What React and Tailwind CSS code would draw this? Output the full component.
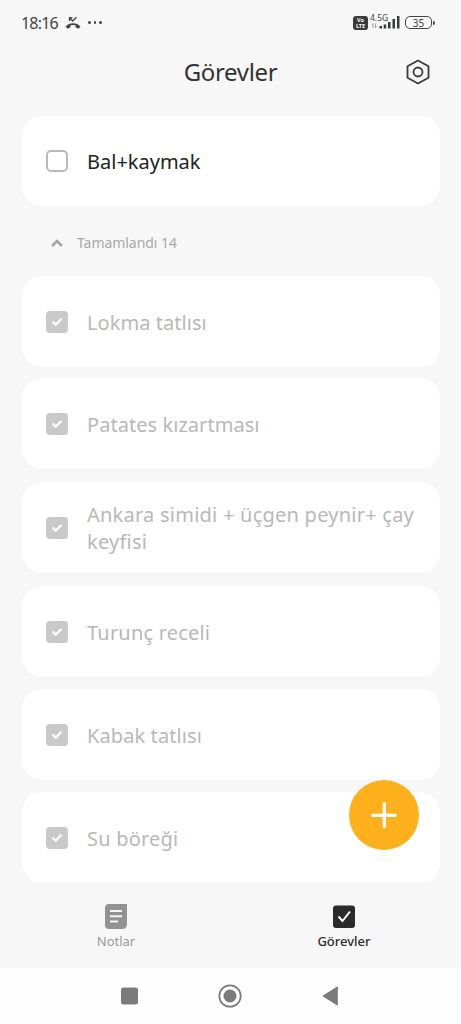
import React from 'react';

const tasks = [
  { title: 'Lokma tatlısı', gap: 'mb-[11px]', tracking: 'tracking-[0.05px]' },
  { title: 'Patates kızartması', gap: 'mb-[13px]', tracking: 'tracking-[0.050px]' },
  { title: 'Ankara simidi + üçgen peynir+ çay keyfisi', gap: 'mb-[13px]', tracking: 'tracking-[0.24px]' },
  { title: 'Turunç receli', gap: 'mb-3', tracking: 'tracking-[0.2px]' },
  { title: 'Kabak tatlısı', gap: 'mb-3', tracking: 'tracking-[0.1px]' },
  { title: 'Su böreği', gap: '', tracking: 'tracking-[0.2px]' },
];

const MissedCall = () => (
  <svg className="w-4 h-4" viewBox="0 0 16 16" fill="none">
    <path d="M0.500 11.500C4 7 12 7 15.500 11.500L13.300 13.700L10.500 12.200V10.300Q8 9.500 5.500 10.300V12.200L2.700 13.700Z" fill="#444" />
    <path d="M4.500 6V2.700H7.500M4.700 3L7.700 6L11.500 2.200" stroke="#444" strokeWidth="1.300" />
  </svg>
);

const StatusBar = () => (
  <div className="h-[45px] shrink-0 flex items-center pl-[21px] pr-[26px] text-[#444]">
    <span className="w-[37px] text-[16px] tracking-[-0.8px] leading-none whitespace-nowrap">18:16</span>
    <span className="ml-[7px]"><MissedCall /></span>
    <div className="ml-[7px] flex gap-[3px]">
      {[0, 1, 2].map((i) => (
        <span key={i} className="w-[2.500px] h-[2.500px] rounded-full bg-[#444]" />
      ))}
    </div>
    <div className="ml-auto flex items-center">
      <div className="w-[15px] h-[14px] rounded-[3px] bg-[#3a3a3a] text-white font-bold text-[5.500px] leading-[6px] flex flex-col items-center justify-center">
        <span>Vo</span>
        <span>LTE</span>
      </div>
      <div className="relative ml-[1px] w-[33px] h-[15px]">
        <span className="absolute left-[1px] top-[-1px] text-[8.500px] leading-[8px] whitespace-nowrap">4.5G</span>
        <svg className="absolute inset-0 w-8 h-[15px]" viewBox="0 0 32 15">
          <path d="M4 13V8.500M2.800 10L4 8.500M6.500 8.500V13M7.700 11.500L6.500 13" stroke="#999" strokeWidth="0.900" fill="none" />
          <path d="M10.500 11h2.500v2.500h-2.500zM14.700 9.500h2.500v4h-2.500zM19 7h2.500v6.500h-2.500zM23.500 4h2.500v9.500h-2.500zM28 1h2.500v12.500h-2.500z" fill="#3a3a3a" />
        </svg>
      </div>
      <div className="ml-[3px] w-[27px] h-[13px] rounded-[5px] border-[1.500px] border-[#444] text-[10px] leading-none flex items-center justify-center">35</div>
      <span className="ml-[1px] w-[2px] h-[4px] rounded-r bg-[#444]" />
    </div>
  </div>
);

const DoneBox = () => (
  <svg className="w-[22px] h-[22px] shrink-0" viewBox="0 0 22 22" fill="none">
    <rect width="22" height="22" rx="4" fill="#c9c9c9" />
    <path d="M6.500 10.700L9.700 13.700L15.500 7.700" stroke="#fff" strokeWidth="2.300" />
  </svg>
);

const TaskCard = ({ task }) => (
  <div className={`h-[91px] shrink-0 rounded-[20px] bg-white flex items-center pl-[23.5px] ${task.gap}`}>
    <DoneBox />
    <p className={`ml-[19.5px] w-[338px] pt-[1px] text-[20px] leading-[27px] text-[#b8b8b8] ${task.tracking}`}>{task.title}</p>
  </div>
);

const App = () => {
  return (
    <div className="relative w-[461px] h-[1024px] overflow-hidden flex flex-col bg-[#f7f7f7] font-['Noto_Sans',sans-serif]">
      <StatusBar />

      <header className="relative h-[55px] shrink-0 flex items-center justify-center text-[#333]">
        <h1 className="pb-[2px] text-[24px] tracking-[-0.35px] leading-none">Görevler</h1>
        <svg className="absolute right-[30px] top-[12.5px] w-[26px] h-[28px]" viewBox="0 0 26 28" fill="none" stroke="#3a3a3a" strokeWidth="1.800" strokeLinejoin="round">
          <path d="M13 2.500L23.500 8.200V19.800L13 25.500L2.500 19.800V8.200Z" />
          <circle cx="13" cy="14" r="4.500" />
        </svg>
      </header>

      <main className="h-[788px] shrink-0 pl-[22px] pr-[21px] pt-4 flex flex-col">
        <div className="h-[90px] shrink-0 rounded-[20px] bg-white flex items-center pl-[23.5px]">
          <span className="w-[22px] h-[22px] shrink-0 rounded-[5px] border-2 border-[#b9b9b9]" />
          <p className="ml-[19.5px] pt-[1px] text-[20px] leading-[27px] text-[#222]">Bal+kaymak</p>
        </div>

        <div className="h-[70px] shrink-0 flex items-center pl-[29px] pt-[3px]">
          <svg className="w-3 h-2" viewBox="0 0 12 8" fill="none">
            <path d="M1 7L6 2L11 7" stroke="#a4a4a4" strokeWidth="2.600" />
          </svg>
          <span className="ml-[14px] text-[14px] tracking-[-0.05px] leading-none text-[#a8a8a8]">Tamamlandı 14</span>
        </div>

        {tasks.map((task) => (
          <TaskCard key={task.title} task={task} />
        ))}
      </main>

      <nav className="h-[80px] shrink-0 flex justify-between pl-[76px] pr-[77px] text-[13px] leading-none">
        <div className="w-20 flex flex-col items-center pt-4 text-[#999]">
          <svg className="w-[22px] h-[25px]" viewBox="0 0 22 25">
            <path d="M4 0H22V20Q22 25 17 25H4Q0 25 0 21V4Q0 0 4 0Z" fill="#939393" />
            <path d="M5 7H17M5 12.200H17M5 17.500H13" stroke="#f7f7f7" strokeWidth="2" />
          </svg>
          <span className="mt-[6px]">Notlar</span>
        </div>
        <div className="w-20 flex flex-col items-center pt-4 text-[#2b2b2b] font-medium">
          <svg className="w-[22px] h-[25px]" viewBox="0 0 22 25" fill="none">
            <rect y="1.500" width="22" height="22.500" rx="3" fill="#2b2b2b" />
            <path d="M5.500 12.500L9.500 17L17 7.500" stroke="#fff" strokeWidth="2" />
          </svg>
          <span className="mt-[6px]">Görevler</span>
        </div>
      </nav>

      <footer className="h-14 shrink-0 bg-[#fefefe]">
        <svg className="w-[461px] h-14" viewBox="0 0 461 56" fill="#7b7b7b">
          <rect x="121" y="19.500" width="17" height="17" rx="2.500" />
          <circle cx="230" cy="28" r="10.700" fill="none" stroke="#7b7b7b" strokeWidth="1.700" />
          <circle cx="230" cy="28" r="6.500" />
          <path d="M323 28L337.300 19V37Z" stroke="#7b7b7b" strokeWidth="1" strokeLinejoin="round" />
        </svg>
      </footer>

      <button className="absolute left-[349px] top-[780px] w-[70px] h-[70px] rounded-full bg-[#ffb11d] flex items-center justify-center">
        <svg className="w-7 h-7" viewBox="0 0 28 28" stroke="#fff" strokeWidth="3.200" strokeLinecap="round">
          <path d="M14.300 2.500V25.500M2.500 14.300H25.500" />
        </svg>
      </button>
    </div>
  );
};

export default App;
